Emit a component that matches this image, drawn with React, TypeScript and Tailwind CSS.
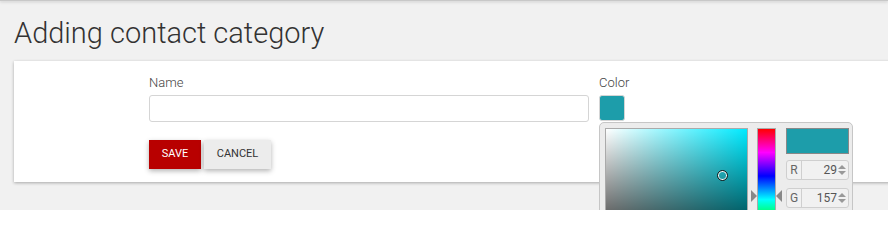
import React from 'react';

function Spinner() {
  return (
    <div className="flex flex-col items-center gap-[2px] w-[9px] mr-[2px]">
      <div className="w-0 h-0 border-x-[4px] border-x-transparent border-b-[4px] border-b-[#999]" />
      <div className="w-0 h-0 border-x-[4px] border-x-transparent border-t-[4px] border-t-[#999]" />
    </div>
  );
}

function ChannelInput({ label, value, className }: { label: string; value: number; className?: string }) {
  return (
    <div
      className={`flex h-[20px] w-[63px] items-stretch rounded-[3px] border border-[#cfcfcf] bg-[#f1f1f1] ${className ?? ''}`}
    >
      <div className="flex w-[15px] items-center justify-center border-r border-[#cfcfcf] text-[12px] text-[#666]">
        {label}
      </div>
      <div className="flex flex-1 items-center justify-end text-[12px] text-[#555]">
        <span>{value}</span>
        <Spinner />
      </div>
    </div>
  );
}

function ColorPicker() {
  return (
    <div className="absolute left-0 top-[27px] z-10 flex h-[200px] w-[254px] rounded-[5px] border border-[#c6c6c6] bg-[#ececec] py-[5px] pl-[5px] pr-[3px]">
      {/* saturation / value square */}
      <div className="relative h-[143px] w-[143px] shrink-0 border border-[#aaa] bg-[#00eaff]">
        <div className="absolute inset-0 bg-[linear-gradient(to_right,#fff,rgba(255,255,255,0))]" />
        <div className="absolute inset-0 bg-[linear-gradient(to_top,#000,rgba(0,0,0,0))]" />
        <div className="absolute left-[111px] top-[41px] h-[11px] w-[11px] rounded-full border border-[#1a1a1a] shadow-[inset_0_0_0_1px_#fff]" />
      </div>

      {/* hue strip */}
      <div className="relative ml-[9px] h-[143px] w-[19px] shrink-0 border border-[#aaa] bg-[linear-gradient(to_bottom,#f00_0%,#f0f_16.67%,#00f_33.33%,#0ff_50%,#0f0_66.67%,#ff0_83.33%,#f00_100%)]">
        <div className="absolute left-[-7px] top-[61px] h-0 w-0 border-y-[6px] border-y-transparent border-l-[6px] border-l-[#888]" />
        <div className="absolute right-[-7px] top-[61px] h-0 w-0 border-y-[6px] border-y-transparent border-r-[6px] border-r-[#888]" />
      </div>

      {/* preview + channels */}
      <div className="ml-[10px] flex shrink-0 flex-col">
        <div className="h-[26px] w-[63px] border border-[#888] bg-[#1d9daa]" />
        <ChannelInput label="R" value={29} className="mt-[6px]" />
        <ChannelInput label="G" value={157} className="mt-[8px]" />
      </div>
    </div>
  );
}

export default function App() {
  return (
    <div className="relative h-[210px] w-[888px] overflow-hidden bg-[#f1f1f1] font-['Roboto',sans-serif]">
      <div className="h-px bg-[#c8c8c8] shadow-[0_1px_3px_rgba(0,0,0,0.25)]" />

      <h1 className="ml-[14px] mt-[14px] text-[29px] font-light leading-[36px] text-[#333]">
        Adding contact category
      </h1>

      <div className="ml-[14px] mt-[10px] w-[900px] bg-white pb-[13px] pl-[135px] pt-[14px] shadow-[0_1px_3px_rgba(0,0,0,0.3)]">
        <div className="flex gap-[10px]">
          <div className="w-[440px]">
            <label className="block text-[13px] font-light leading-[15px] text-[#444]">Name</label>
            <input
              type="text"
              className="mt-[5px] block h-[27px] w-full rounded-[3px] border border-[#d5d5d5] bg-white px-2 text-[13px] outline-none"
            />
            <div className="mt-[18px] flex gap-[3px]">
              <button className="h-[29px] w-[52px] bg-[#b80000] text-[11px] text-white shadow-[0_2px_5px_rgba(0,0,0,0.3)]">
                SAVE
              </button>
              <button className="h-[29px] w-[67px] bg-[#ececec] text-[11px] text-[#333] shadow-[0_2px_5px_rgba(0,0,0,0.3)]">
                CANCEL
              </button>
            </div>
          </div>

          <div>
            <label className="block text-[13px] font-light leading-[15px] text-[#444]">Color</label>
            <div className="relative mt-[5px]">
              <div className="h-[26px] w-[26px] rounded-[3px] border border-[#d5d5d5] bg-[#1d9daa]" />
              <ColorPicker />
            </div>
          </div>
        </div>
      </div>
    </div>
  );
}
